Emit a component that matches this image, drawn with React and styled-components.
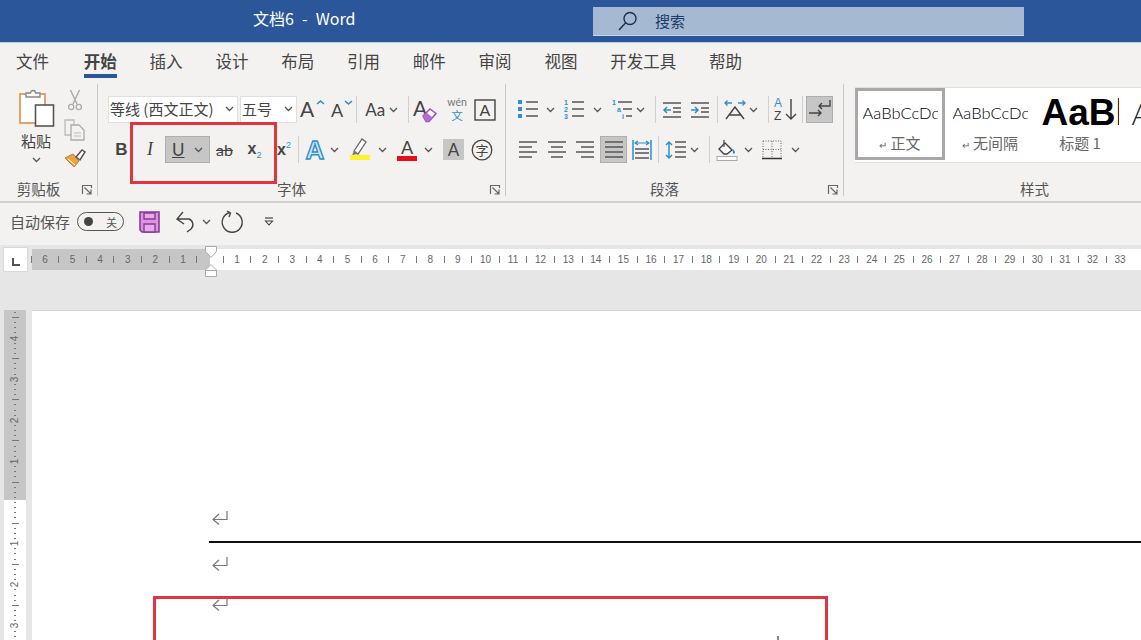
import React from 'react'
import styled, { createGlobalStyle } from 'styled-components'

const CJK = `"Noto Sans CJK SC", "Noto Sans", sans-serif`
const INK = '#555'
const BLUE = '#2f8fcb'

const Line = ({ d, c = INK, w = 1.5 }) => <path d={d} fill="none" stroke={c} strokeWidth={w} />

function Chevron() {
  return (
    <svg width="9" height="6" viewBox="0 0 9 6">
      <Line d="M1 1l3.5 3.5L8 1" w={1.3} />
    </svg>
  )
}

function Launcher() {
  return (
    <svg width="10" height="10" viewBox="0 0 10 10">
      <Line d="M.5 9V.5H9.5V3M2.5 2.5L8.5 8.5M9 4.5V9H4.5" c="#666" w={1.2} />
    </svg>
  )
}

function PasteIcon() {
  return (
    <svg width="38" height="38" viewBox="0 0 38 38">
      <rect x="3" y="5" width="25" height="29" fill="#fff" stroke="#e3a367" strokeWidth="2" />
      <path d="M9 8V4h4.5a2.5 2.5 0 0 1 5 0H23v4z" fill="#fff" stroke="#888" strokeWidth="1.3" />
      <rect x="18.5" y="16" width="18" height="21" fill="#fff" stroke="#555" strokeWidth="1.6" />
    </svg>
  )
}

function CutIcon() {
  return (
    <svg width="16" height="22" viewBox="0 0 16 22">
      <Line d="M3.5 1l6.5 14M12.5 1L6 15" c="#aaa" w={1.4} />
      <circle cx="4.2" cy="18" r="2.6" fill="none" stroke="#aaa" strokeWidth="1.3" />
      <circle cx="11.8" cy="18" r="2.6" fill="none" stroke="#aaa" strokeWidth="1.3" />
    </svg>
  )
}

function CopyIcon() {
  return (
    <svg width="22" height="22" viewBox="0 0 22 22">
      <path d="M1 1h9l0 15H1z" fill="none" stroke="#bbb" strokeWidth="1.3" />
      <path d="M7 6h8l5 5v10H7z" fill="#f3f2f1" stroke="#aaa" strokeWidth="1.3" />
      <Line d="M10 14h7M10 17h7" c="#bbb" w={1} />
    </svg>
  )
}

function BrushIcon() {
  return (
    <svg width="22" height="20" viewBox="0 0 22 20">
      <path d="M1 10l8-4 6 7-5 6z" fill="#eda247" stroke="#c97d22" strokeWidth="1" />
      <Line d="M4 11l7 6" c="#fff" w={1} />
      <path d="M12 9l6-7 3 2-5 8z" fill="#fff" stroke="#555" strokeWidth="1.5" />
    </svg>
  )
}

function GrowIcon({ small, color = BLUE }) {
  return (
    <svg width="28" height="26" viewBox="0 0 28 26">
      <text x={small ? 3 : 1} y="20" fontFamily="Lato, sans-serif" fontSize={small ? 18 : 21} fill="#444">A</text>
      <Line d={small ? 'M17 4l3.5 3L24 4' : 'M18 7l3.5-3L25 7'} c={color} w={1.6} />
    </svg>
  )
}

function ClearIcon() {
  return (
    <svg width="26" height="26" viewBox="0 0 26 26">
      <text x="1" y="19" fontFamily="Lato, sans-serif" fontSize="21" fill="#444">A</text>
      <path d="M11 19l7-7 6 4.500-7 8h-3z" fill="#fff" stroke="#9a4fc0" strokeWidth="1.5" />
      <path d="M11 19l3.500-3.500 5.500 4.500-3 4.500h-3z" fill="#b56bd6" />
    </svg>
  )
}

function WenIcon() {
  return (
    <svg width="26" height="30" viewBox="0 0 26 30">
      <text x="13" y="11" textAnchor="middle" fontFamily="Lato, sans-serif" fontSize="10.500" fill="#777">wén</text>
      <text x="13" y="24.500" textAnchor="middle" fontFamily={CJK} fontSize="11.500" fill={BLUE}>文</text>
    </svg>
  )
}

function BoxAIcon() {
  return (
    <svg width="22" height="22" viewBox="0 0 22 22">
      <rect x="1" y="1" width="20" height="20" fill="none" stroke="#444" strokeWidth="1.4" />
      <text x="11" y="17" textAnchor="middle" fontFamily="Lato, sans-serif" fontSize="16" fill="#444">A</text>
    </svg>
  )
}

function EffectAIcon() {
  return (
    <svg width="26" height="26" viewBox="0 0 26 26">
      <text x="13" y="22" textAnchor="middle" fontFamily="Liberation Sans, sans-serif" fontWeight="700" fontSize="26" fill="#cfe6f5" stroke={BLUE} strokeWidth="1.4">A</text>
    </svg>
  )
}

function HighlightIcon() {
  return (
    <svg width="22" height="24" viewBox="0 0 22 24">
      <path d="M5 13l8-12 4 3-8 12z" fill="#fff" stroke="#666" strokeWidth="1.3" />
      <path d="M5 13l4 3-6 1z" fill="#777" />
      <rect x="1" y="17" width="20" height="5" fill="#fff22e" />
    </svg>
  )
}

function ColorAIcon() {
  return (
    <svg width="22" height="24" viewBox="0 0 22 24">
      <text x="11" y="16" textAnchor="middle" fontFamily="Lato, sans-serif" fontSize="18" fill="#444">A</text>
      <rect x="1" y="18" width="20" height="5" fill="#e3101b" />
    </svg>
  )
}

function CircleCharIcon() {
  return (
    <svg width="22" height="22" viewBox="0 0 22 22">
      <circle cx="11" cy="11" r="9.800" fill="none" stroke="#444" strokeWidth="1.3" />
      <text x="11" y="15.500" textAnchor="middle" fontFamily={CJK} fontSize="13" fill="#444">字</text>
    </svg>
  )
}

function ListIcon({ kind }) {
  const marks = {
    bullet: (
      <>
        <rect x="0" y="1" width="4" height="4" fill={BLUE} />
        <rect x="0" y="8" width="4" height="4" fill={BLUE} />
        <rect x="0" y="15" width="4" height="4" fill={BLUE} />
      </>
    ),
    number: (
      <g fontFamily="Liberation Sans, sans-serif" fontSize="7" fontWeight="700" fill={BLUE}>
        <text x="0" y="6">1</text>
        <text x="0" y="13">2</text>
        <text x="0" y="20">3</text>
      </g>
    ),
    multi: (
      <g fontFamily="Liberation Sans, sans-serif" fontSize="7" fontWeight="700" fill={BLUE}>
        <text x="0" y="6">1</text>
        <text x="5" y="13">a</text>
        <text x="10" y="20">i</text>
      </g>
    ),
  }
  const bars = kind === 'multi' ? 'M6 3h14M11 10h9M14 17h6' : 'M8 3h12M8 10h12M8 17h12'
  return (
    <svg width="20" height="21" viewBox="0 0 20 21">
      {marks[kind]}
      <Line d={bars} />
    </svg>
  )
}

function IndentIcon({ out }) {
  return (
    <svg width="20" height="18" viewBox="0 0 20 18">
      <Line d="M1 2h18M11 7h8M11 11h8M1 16h18" />
      <Line d={out ? 'M9 9H2M5 6L2 9l3 3' : 'M1 9h7M5 6l3 3-3 3'} c={BLUE} w={1.5} />
    </svg>
  )
}

function LayoutIcon() {
  return (
    <svg width="22" height="22" viewBox="0 0 22 22">
      <Line d="M2 20L11 8l9 12M5 16h12" c="#444" w={1.4} />
      <Line d="M1 4h7M3.500 1.500L1 4l2.500 2.500M14 4h7M18.500 1.500L21 4l-2.500 2.500" c={BLUE} w={1.4} />
    </svg>
  )
}

function SortIcon() {
  return (
    <svg width="23" height="27" viewBox="0 0 23 27">
      <text x="0" y="11" fontFamily="Liberation Sans, sans-serif" fontSize="12" fill={BLUE}>A</text>
      <text x="0" y="24" fontFamily="Liberation Sans, sans-serif" fontSize="12" fill="#444">Z</text>
      <Line d="M17 3v20M12 18l5 5 5-5" c="#444" w={1.4} />
    </svg>
  )
}

function MarkToggleIcon() {
  return (
    <svg width="24" height="22" viewBox="0 0 24 22">
      <Line d="M22 1v6H11M14 4l-3 3 3 3" c="#444" w={1.4} />
      <Line d="M1 14h12M10 11l3 3-3 3" c="#444" w={1.4} />
    </svg>
  )
}

function AlignIcon({ type }) {
  const paths = {
    left: 'M1 2h18M1 7h13M1 12h18M1 17h13',
    center: 'M1 2h18M4 7h12M1 12h18M4 17h12',
    right: 'M1 2h18M6 7h13M1 12h18M6 17h13',
    justify: 'M1 2h18M1 7h18M1 12h18M1 17h18',
  }
  return (
    <svg width="20" height="19" viewBox="0 0 20 19">
      <Line d={paths[type]} />
    </svg>
  )
}

function DistributeIcon() {
  return (
    <svg width="20" height="20" viewBox="0 0 20 20">
      <Line d="M1 0v20M19 0v20" c={BLUE} />
      <Line d="M3 3h14M6 1L3 3l3 2M14 1l3 2-3 2" c={BLUE} w={1.2} />
      <Line d="M3 9h14M3 13h14M3 18h14" />
    </svg>
  )
}

function SpacingIcon() {
  return (
    <svg width="22" height="20" viewBox="0 0 22 20">
      <Line d="M4 2v16M1 5l3-3 3 3M1 15l3 3 3-3" c={BLUE} />
      <Line d="M10 2h11M10 7h11M10 12h11M10 17h11" />
    </svg>
  )
}

function ShadingIcon() {
  return (
    <svg width="22" height="22" viewBox="0 0 22 22">
      <path d="M3 10l6-6 7 7-5 4H8z" fill="#fff" stroke="#444" strokeWidth="1.4" />
      <Line d="M8 1v7" c="#444" w={1.2} />
      <path d="M17 10c2 2 2.500 3.500 1.500 4.500S16 14 17 10z" fill={BLUE} />
      <rect x="1" y="17.500" width="20" height="4" fill="#fff" stroke="#aaa" />
    </svg>
  )
}

function BordersIcon() {
  return (
    <svg width="20" height="20" viewBox="0 0 20 20">
      <path d="M1 1h18v17M1 1v17M10 1v17M1 9.500h18" fill="none" stroke="#666" strokeWidth="1" strokeDasharray="1 1.500" />
      <Line d="M0 18.500h20" c="#333" />
    </svg>
  )
}

function SearchIcon() {
  return (
    <svg width="20" height="20" viewBox="0 0 20 20">
      <circle cx="12" cy="7.500" r="6" fill="none" stroke="#1e2f4d" strokeWidth="1.4" />
      <Line d="M7.500 12L1 19" c="#1e2f4d" />
    </svg>
  )
}

function SaveIcon() {
  return (
    <svg width="21" height="22" viewBox="0 0 21 22">
      <path d="M1 1h19v20H3l-2-2z" fill="#dc93e2" stroke="#8a3a99" strokeWidth="1.6" />
      <path d="M5 2h11v6H5zM5 13h11v8H5z" fill="#e6a9ea" stroke="#8a3a99" strokeWidth="1.400" />
    </svg>
  )
}

function UndoIcon({ redo }) {
  return redo ? (
    <svg width="22" height="23" viewBox="0 0 22 23">
      <Line d="M8 2.500A10 10 0 1 0 14 3M5 1l3.500 2L7 7" c="#444" w={1.4} />
    </svg>
  ) : (
    <svg width="21" height="23" viewBox="0 0 21 23">
      <Line d="M1 9h12a6 6 0 0 1 2 10l-4 3M7 2L1 9l7 5" c="#444" w={1.4} />
    </svg>
  )
}

function CustomizeIcon() {
  return (
    <svg width="10" height="9" viewBox="0 0 10 9">
      <Line d="M1 1h8" c="#444" w={1.2} />
      <path d="M1.500 4h7L5 8z" fill="none" stroke="#444" strokeWidth="1.100" />
    </svg>
  )
}

function ParaMark() {
  return (
    <svg width="16" height="14" viewBox="0 0 16 14">
      <Line d="M15 0v8.500H1.500M7 3L1 8.500 7 13.500" c="#777" w={1.2} />
    </svg>
  )
}

function IndentMarker() {
  return (
    <svg width="12" height="31" viewBox="0 0 12 31">
      <path d="M.5.500h11v5L6 11.500.5 5.500z" fill="#fff" stroke="#aaa" />
      <path d="M6 18.500l5.500 5.500v6.500H.5V24zM.5 24.500h11" fill="#fff" stroke="#aaa" />
    </svg>
  )
}

const Global = createGlobalStyle`
  html, body { margin: 0; padding: 0; background: #e6e6e6; }
  #root { width: 1141px; height: 640px; overflow: hidden; }
  svg { overflow: visible; }
`

const Window = styled.div`
  width: 1141px;
  height: 640px;
  display: flex;
  flex-direction: column;
  overflow: hidden;
  font-family: ${CJK};
`

const TitleBar = styled.div`
  height: 42px;
  flex: none;
  background: #2b579a;
  display: flex;
  align-items: center;
  padding-left: 253px;
  box-sizing: border-box;
`

const DocTitle = styled.div`
  width: 340px;
  margin-top: -6px;
  font-size: 16px;
  word-spacing: 0.500px;
  color: #fff;
  white-space: pre;
`

const SearchBox = styled.div`
  width: 431px;
  height: 29px;
  background: #a5b9d3;
  border-bottom: 1px solid #c5d6ea;
  box-sizing: border-box;
  display: flex;
  align-items: center;
  padding-left: 25px;
  gap: 17px;
  font-size: 15px;
  color: #1f3b68;
`

const TabBar = styled.div`
  height: 40px;
  flex: none;
  box-sizing: border-box;
  background: #f3f2f1;
  border-top: 1px solid #b7cde6;
  display: flex;
  gap: 32.800px;
  padding-left: 16px;
`

const Tab = styled.div`
  height: 35px;
  box-sizing: border-box;
  padding-top: 6px;
  margin-left: ${p => (p.$active ? 2 : 0)}px;
  font-size: 16.500px;
  line-height: 24px;
  color: #444;
  font-weight: ${p => (p.$active ? 700 : 400)};
  border-bottom: ${p => (p.$active ? '4px solid #2b579a' : '0')};
`

const Ribbon = styled.div`
  position: relative;
  height: 121px;
  flex: none;
  box-sizing: border-box;
  background: #f3f2f1;
  border-bottom: 2px solid #d2d0ce;
  display: flex;
`

const Group = styled.div`
  width: ${p => p.$w}px;
  flex: none;
  min-width: 0;
  display: flex;
  flex-direction: column;
`

const GroupBody = styled.div`
  height: 96px;
  box-sizing: border-box;
  padding: ${p => p.$pad || '14px 0 0 10px'};
  display: flex;
  flex-direction: ${p => (p.$row ? 'row' : 'column')};
  gap: ${p => (p.$row ? 0 : 13)}px;
`

const GroupFoot = styled.div`
  height: 21px;
  display: flex;
  align-items: center;
`

const GroupLabel = styled.div`
  flex: 1;
  text-align: center;
  font-size: 14.500px;
  color: #555;
`

const LauncherBox = styled.div`
  width: 20px;
  display: flex;
  justify-content: center;
  margin-top: 2px;
`

const GroupDivider = styled.div`
  width: 1px;
  flex: none;
  margin: 2px 0 5px;
  background: #c8c6c4;
`

const PasteColumn = styled.div`
  width: 54px;
  margin-left: -1px;
  margin-top: -7px;
  display: flex;
  flex-direction: column;
  align-items: center;
  font-size: 15px;
  line-height: 20px;
  color: #444;
`

const PasteText = styled.div`
  margin-top: 4px;
  margin-bottom: 6px;
`

const SmallColumn = styled.div`
  width: 24px;
  height: 79px;
  margin-top: -7px;
  display: flex;
  flex-direction: column;
  align-items: center;
  justify-content: space-between;
`

const ToolRow = styled.div`
  height: 27px;
  display: flex;
  align-items: center;
`

const Tool = styled.div`
  width: ${p => p.$w || 20}px;
  height: ${p => p.$h || 27}px;
  flex: none;
  margin-left: ${p => p.$ml || 0}px;
  display: flex;
  align-items: center;
  justify-content: ${p => (p.$spread ? 'space-between' : 'center')};
  box-sizing: border-box;
  color: #444;
  background: ${p => (p.$on ? '#c6c6c6' : 'transparent')};
  border: ${p => (p.$on && !p.$flat ? '1px solid #aeaeae' : '0')};
  padding: ${p => (p.$spread ? '0 6px' : '0')};
  white-space: nowrap;
`

const VSep = styled.div`
  width: 1px;
  height: 27px;
  flex: none;
  margin-left: ${p => p.$ml || 0}px;
  background: #d2d0ce;
`

const Select = styled.div`
  width: ${p => p.$w}px;
  height: 27px;
  flex: none;
  margin-left: ${p => p.$ml || 0}px;
  box-sizing: border-box;
  background: #fff;
  border: 1px solid #e1dfdd;
  display: flex;
  align-items: center;
  justify-content: space-between;
  padding: 0 3px 2px 1px;
  font-size: 15px;
  color: #444;
  white-space: nowrap;
`

const Glyph = styled.span`
  font-family: ${p => p.$font || '"Liberation Sans"'}, sans-serif;
  font-size: ${p => p.$size || 16}px;
  font-weight: ${p => p.$weight || 400};
  font-style: ${p => (p.$italic ? 'italic' : 'normal')};
  text-decoration: ${p => p.$deco || 'none'};
  color: ${p => p.$color || '#444'};
`

const Sub = styled.span`
  font-size: 9px;
  font-weight: 400;
  color: ${BLUE};
  vertical-align: ${p => (p.$up ? '7px' : '-4px')};
`

const Gallery = styled.div`
  margin: 5px 0 0 11px;
  height: 74px;
  background: #fff;
  border-top: 1px solid #e1dfdd;
  border-bottom: 1px solid #e1dfdd;
  display: flex;
  overflow: hidden;
`

const StyleCard = styled.div`
  width: 90px;
  flex: none;
  height: 72px;
  box-sizing: border-box;
  border: 3px solid ${p => (p.$on ? '#a8a8a8' : '#fff')};
  display: flex;
  flex-direction: column;
  align-items: center;
  overflow: hidden;
`

const StyleSample = styled.div`
  width: ${p => (p.$big ? 77 : 75)}px;
  height: 42px;
  padding-top: 1px;
  overflow: hidden;
  line-height: 42px;
  white-space: nowrap;
  color: #000;
  font-family: ${p => (p.$big ? '"Liberation Sans"' : 'Lato')}, sans-serif;
  font-size: ${p => (p.$big ? 37 : 16.500)}px;
  font-weight: ${p => (p.$big ? 700 : 300)};
`

const HeadingTwoSample = styled.div`
  width: 77px;
  height: 42px;
  padding-top: 1px;
  line-height: 42px;
  color: #222;
  font-family: Lato, sans-serif;
  font-size: 30px;
  font-weight: 300;
`

const StyleName = styled.div`
  margin-top: -1px;
  font-size: 15px;
  line-height: 20px;
  color: #666;
  white-space: pre;
`

const ReturnGlyph = styled.span`
  font-size: 10px;
  margin-right: 3px;
`

const Callout = styled.div`
  position: absolute;
  left: 130px;
  top: 40px;
  width: 147px;
  height: 62px;
  box-sizing: border-box;
  border: 3px solid #e2343c;
  pointer-events: none;
`

const QuickBar = styled.div`
  height: 42px;
  flex: none;
  box-sizing: border-box;
  background: #f3f2f1;
  display: flex;
  align-items: center;
  padding: 0 0 5px 10px;
  font-size: 15px;
  color: #555;
`

const Toggle = styled.div`
  width: 47px;
  height: 19px;
  margin-left: 7px;
  box-sizing: border-box;
  border: 1px solid #555;
  border-radius: 10px;
  display: flex;
  align-items: center;
  justify-content: space-between;
  padding: 0 6px;
  font-size: 11px;
  color: #555;
`

const ToggleDot = styled.div`
  width: 9px;
  height: 9px;
  border-radius: 50%;
  background: #444;
`

const QuickItem = styled.div`
  display: flex;
  margin-left: ${p => p.$ml}px;
`

const Workspace = styled.div`
  flex: 1;
  min-height: 0;
  background: #e6e6e6;
  display: flex;
  flex-direction: column;
`

const RulerRow = styled.div`
  position: relative;
  height: 65px;
  flex: none;
  box-sizing: border-box;
  padding: 4px 0 0 32px;
  display: flex;
  overflow: hidden;
`

const RulerCorner = styled.div`
  position: absolute;
  left: 3px;
  top: 2px;
  width: 25px;
  height: 25px;
  box-sizing: border-box;
  background: #fff;
  border: 1px solid #d8d8d8;
  display: flex;
  align-items: center;
  justify-content: center;
`

const CornerMark = styled.div`
  width: 6px;
  height: 6px;
  margin-top: 4px;
  border-left: 2px solid #555;
  border-bottom: 2px solid #555;
`

const RulerMargin = styled.div`
  width: 178px;
  height: 21px;
  flex: none;
  background: #c6c6c6;
  display: flex;
  justify-content: flex-end;
  padding-right: 12.800px;
  box-sizing: border-box;
`

const RulerBody = styled.div`
  flex: 1;
  height: 21px;
  background: #fff;
  display: flex;
  padding-left: 12.800px;
  box-sizing: border-box;
`

const RulerCell = styled.div`
  width: 27.600px;
  flex: none;
  display: flex;
  align-items: center;
`

const RulerTick = styled.div`
  width: 1px;
  height: 7px;
  flex: none;
  align-self: center;
  background: #777;
`

const RulerNumber = styled.div`
  flex: 1;
  text-align: center;
  font-family: "Liberation Sans", sans-serif;
  font-size: 10px;
  color: #666;
`

const IndentHandle = styled.div`
  position: absolute;
  left: 205px;
  top: 1px;
  display: flex;
`

const DocRow = styled.div`
  flex: 1;
  min-height: 0;
  display: flex;
`

const VRuler = styled.div`
  width: 22px;
  margin-left: 4px;
  flex: none;
  display: flex;
  flex-direction: column;
`

const VRulerPart = styled.div`
  height: ${p => p.$h}px;
  flex: none;
  overflow: hidden;
  background: ${p => (p.$margin ? '#c6c6c6' : '#fff')};
  display: flex;
  flex-direction: column;
  justify-content: ${p => (p.$margin ? 'flex-end' : 'flex-start')};
  align-items: center;
`

const VMark = styled.div`
  height: 5.150px;
  flex: none;
  display: flex;
  align-items: center;
  justify-content: center;
`

const VDot = styled.div`
  width: ${p => (p.$long ? 7 : 2)}px;
  height: 1px;
  background: #777;
`

const VNumber = styled.div`
  transform: rotate(-90deg);
  font-family: "Liberation Sans", sans-serif;
  font-size: 10px;
  color: #666;
`

const Page = styled.div`
  flex: 1;
  margin-left: 6px;
  background: #fff;
  border-top: 1px solid #d4d4d4;
  padding: 200px 0 0 177px;
  box-sizing: border-box;
  overflow: hidden;
`

const MarkLine = styled.div`
  height: 14px;
  display: flex;
  margin-left: 3px;
  margin-top: ${p => p.$mt || 0}px;
`

const DocRule = styled.div`
  height: 2px;
  margin-top: 16px;
  background: #111;
`

const RedFrame = styled.div`
  position: relative;
  width: 675px;
  height: 90px;
  margin: 25px 0 0 -56px;
  box-sizing: border-box;
  border: 3px solid #e2343c;
  padding-left: 53px;
`

const CursorTip = styled.div`
  position: absolute;
  left: 621px;
  top: 37px;
  width: 2px;
  height: 5px;
  background: #888;
`

const tabs = ['文件', '开始', '插入', '设计', '布局', '引用', '邮件', '审阅', '视图', '开发工具', '帮助']
const leftNumbers = [6, 5, 4, 3, 2, 1]
const rightNumbers = Array.from({ length: 33 }, (_, i) => i + 1)

function vMark(k) {
  if (k === 0) return <VDot />
  if (k % 8 === 0) return <VNumber>{Math.abs(k) / 8}</VNumber>
  if (k % 4 === 0) return <VDot $long />
  return <VDot />
}

const vMargin = Array.from({ length: 37 }, (_, i) => i - 37)
const vBody = Array.from({ length: 28 }, (_, i) => i)

function App() {
  return (
    <Window>
      <Global />
      <TitleBar>
        <DocTitle>文档6  -  Word</DocTitle>
        <SearchBox>
          <SearchIcon />
          搜索
        </SearchBox>
      </TitleBar>

      <TabBar>
        {tabs.map(t => (
          <Tab key={t} $active={t === '开始'}>{t}</Tab>
        ))}
      </TabBar>

      <Ribbon>
        <Group $w={97}>
          <GroupBody $row $pad="14px 0 0 10px">
            <PasteColumn>
              <PasteIcon />
              <PasteText>粘贴</PasteText>
              <Chevron />
            </PasteColumn>
            <SmallColumn>
              <CutIcon />
              <CopyIcon />
              <BrushIcon />
            </SmallColumn>
          </GroupBody>
          <GroupFoot>
            <GroupLabel>剪贴板</GroupLabel>
            <LauncherBox><Launcher /></LauncherBox>
          </GroupFoot>
        </Group>
        <GroupDivider />

        <Group $w={407}>
          <GroupBody>
            <ToolRow>
              <Select $w={130}>等线 (西文正文)<Chevron /></Select>
              <Select $w={57} $ml={2}>五号<Chevron /></Select>
              <Tool $w={30} $ml={1}><GrowIcon /></Tool>
              <Tool $w={28}><GrowIcon small /></Tool>
              <VSep />
              <Tool $w={33} $ml={8}>
                <Glyph $font="Lato" $size={17}>Aa</Glyph>&nbsp;<Chevron />
              </Tool>
              <VSep $ml={10} />
              <Tool $w={26} $ml={3}><ClearIcon /></Tool>
              <Tool $w={26} $ml={6}><WenIcon /></Tool>
              <Tool $w={22} $ml={4}><BoxAIcon /></Tool>
            </ToolRow>
            <ToolRow>
              <Tool $w={27}><Glyph $size={17} $weight={700}>B</Glyph></Tool>
              <Tool $w={30}><Glyph $font="Liberation Serif" $size={18} $italic>I</Glyph></Tool>
              <Tool $w={45} $on $spread>
                <Glyph $font="Lato" $size={17} $deco="underline">U</Glyph>
                <Chevron />
              </Tool>
              <Tool $w={29}><Glyph $font="Lato" $size={16} $deco="line-through">ab</Glyph></Tool>
              <Tool $w={31}><Glyph $size={16} $weight={700}>x<Sub>2</Sub></Glyph></Tool>
              <Tool $w={28}><Glyph $size={16} $weight={700}>x<Sub $up>2</Sub></Glyph></Tool>
              <VSep />
              <Tool $w={26} $ml={3}><EffectAIcon /></Tool>
              <Tool $w={10} $ml={1}><Chevron /></Tool>
              <Tool $ml={11}><HighlightIcon /></Tool>
              <Tool $w={10} $ml={7}><Chevron /></Tool>
              <Tool $ml={10}><ColorAIcon /></Tool>
              <Tool $w={10} $ml={6}><Chevron /></Tool>
              <Tool $w={21} $h={21} $ml={10} $on $flat><Glyph $font="Lato" $size={17}>A</Glyph></Tool>
              <Tool $w={24} $ml={6}><CircleCharIcon /></Tool>
            </ToolRow>
          </GroupBody>
          <GroupFoot>
            <GroupLabel>字体</GroupLabel>
            <LauncherBox><Launcher /></LauncherBox>
          </GroupFoot>
        </Group>
        <GroupDivider />

        <Group $w={337}>
          <GroupBody $pad="14px 0 0 12px">
            <ToolRow>
              <Tool><ListIcon kind="bullet" /></Tool>
              <Tool $w={10} $ml={7}><Chevron /></Tool>
              <Tool $ml={9}><ListIcon kind="number" /></Tool>
              <Tool $w={10} $ml={8}><Chevron /></Tool>
              <Tool $ml={10}><ListIcon kind="multi" /></Tool>
              <Tool $w={10} $ml={3}><Chevron /></Tool>
              <VSep $ml={10} />
              <Tool $ml={6}><IndentIcon out /></Tool>
              <Tool $ml={8}><IndentIcon /></Tool>
              <VSep $ml={7} />
              <Tool $w={22} $ml={6}><LayoutIcon /></Tool>
              <Tool $w={10} $ml={2}><Chevron /></Tool>
              <VSep $ml={10} />
              <Tool $w={23} $ml={5}><SortIcon /></Tool>
              <VSep $ml={5} />
              <Tool $w={27} $ml={3} $on><MarkToggleIcon /></Tool>
            </ToolRow>
            <ToolRow>
              <Tool><AlignIcon type="left" /></Tool>
              <Tool $ml={9}><AlignIcon type="center" /></Tool>
              <Tool $ml={8}><AlignIcon type="right" /></Tool>
              <Tool $w={27} $ml={5} $on><AlignIcon type="justify" /></Tool>
              <Tool $ml={5}><DistributeIcon /></Tool>
              <VSep $ml={6} />
              <Tool $w={22} $ml={6}><SpacingIcon /></Tool>
              <Tool $w={10} $ml={2}><Chevron /></Tool>
              <VSep $ml={10} />
              <Tool $w={22} $ml={6}><ShadingIcon /></Tool>
              <Tool $w={10} $ml={5}><Chevron /></Tool>
              <Tool $w={22} $ml={8}><BordersIcon /></Tool>
              <Tool $w={10} $ml={7}><Chevron /></Tool>
            </ToolRow>
          </GroupBody>
          <GroupFoot>
            <GroupLabel>段落</GroupLabel>
            <LauncherBox><Launcher /></LauncherBox>
          </GroupFoot>
        </Group>
        <GroupDivider />

        <Group $w={381}>
          <GroupBody $pad="0">
            <Gallery>
              <StyleCard $on>
                <StyleSample>AaBbCcDd</StyleSample>
                <StyleName><ReturnGlyph>↵</ReturnGlyph>正文</StyleName>
              </StyleCard>
              <StyleCard>
                <StyleSample>AaBbCcDd</StyleSample>
                <StyleName><ReturnGlyph>↵</ReturnGlyph>无间隔</StyleName>
              </StyleCard>
              <StyleCard>
                <StyleSample $big>AaBb</StyleSample>
                <StyleName>标题 1</StyleName>
              </StyleCard>
              <StyleCard>
                <HeadingTwoSample>A</HeadingTwoSample>
              </StyleCard>
            </Gallery>
          </GroupBody>
          <GroupFoot>
            <GroupLabel>样式</GroupLabel>
          </GroupFoot>
        </Group>

        <Callout />
      </Ribbon>

      <QuickBar>
        自动保存
        <Toggle><ToggleDot />关</Toggle>
        <QuickItem $ml={15}><SaveIcon /></QuickItem>
        <QuickItem $ml={16}><UndoIcon /></QuickItem>
        <QuickItem $ml={5}><Chevron /></QuickItem>
        <QuickItem $ml={11}><UndoIcon redo /></QuickItem>
        <QuickItem $ml={20}><CustomizeIcon /></QuickItem>
      </QuickBar>

      <Workspace>
        <RulerRow>
          <RulerCorner><CornerMark /></RulerCorner>
          <RulerMargin>
            {leftNumbers.map(n => (
              <RulerCell key={n}>
                <RulerTick />
                <RulerNumber>{n}</RulerNumber>
              </RulerCell>
            ))}
            <RulerTick />
          </RulerMargin>
          <RulerBody>
            {rightNumbers.map(n => (
              <RulerCell key={n}>
                <RulerTick />
                <RulerNumber>{n}</RulerNumber>
              </RulerCell>
            ))}
          </RulerBody>
          <IndentHandle><IndentMarker /></IndentHandle>
        </RulerRow>

        <DocRow>
          <VRuler>
            <VRulerPart $margin $h={190}>
              {vMargin.map(k => <VMark key={k}>{vMark(k)}</VMark>)}
            </VRulerPart>
            <VRulerPart $h={140}>
              {vBody.map(k => <VMark key={k}>{vMark(k)}</VMark>)}
            </VRulerPart>
          </VRuler>
          <Page>
            <MarkLine><ParaMark /></MarkLine>
            <DocRule />
            <MarkLine $mt={14}><ParaMark /></MarkLine>
            <RedFrame>
              <MarkLine $mt={-2}><ParaMark /></MarkLine>
              <CursorTip />
            </RedFrame>
          </Page>
        </DocRow>
      </Workspace>
    </Window>
  )
}

export default App
